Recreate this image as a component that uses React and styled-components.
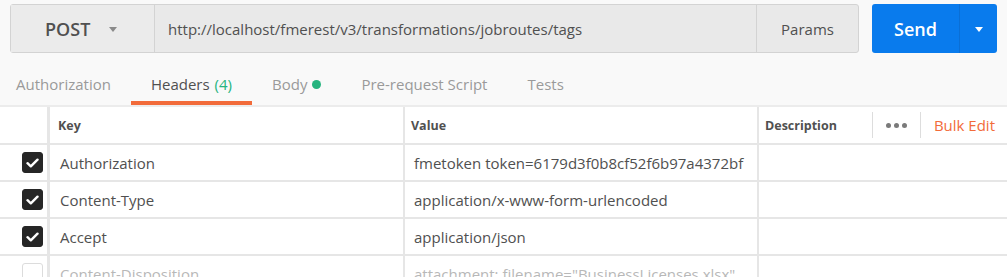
import React from 'react';
import styled, { createGlobalStyle } from 'styled-components';

const GlobalStyle = createGlobalStyle`
  body {
    margin: 0;
    background-color: #f9f9f9;
    font-family: 'Open Sans', 'Noto Sans', sans-serif;
    color: #505050;
  }
`;

const Page = styled.div`
  width: 1007px;
  height: 277px;
  overflow: hidden;
`;

const TopBar = styled.div`
  display: flex;
  padding: 4px 10px 0px 10px;
  height: 49px;
`;

const RequestBox = styled.div`
  flex: 1;
  display: flex;
  background-color: #e9e9e9;
  border: 1px solid #d3d3d3;
  border-radius: 3px;
`;

const MethodSelect = styled.div`
  display: flex;
  align-items: center;
  width: 144px;
  box-sizing: border-box;
  padding: 0px 0px 0px 34px;
  border-right: 1px solid #d3d3d3;
  background-color: #ebebeb;
  font-size: 18px;
  font-weight: 600;
  color: #505050;
`;

const Caret = styled.span`
  display: inline-block;
  width: 0;
  height: 0;
  margin: 1px 0px 0px ${(p) => p.$gap || 0}px;
  border-left: 4px solid transparent;
  border-right: 4px solid transparent;
  border-top: 5px solid ${(p) => p.$color || '#8a8a8a'};
`;

const UrlField = styled.div`
  flex: 1;
  display: flex;
  align-items: center;
  padding: 0px 0px 0px 13px;
  font-size: 15px;
  color: #505050;
`;

const ParamsButton = styled.div`
  display: flex;
  align-items: center;
  justify-content: center;
  width: 101px;
  border-left: 1px solid #d3d3d3;
  font-size: 15px;
  color: #505050;
`;

const SendGroup = styled.div`
  display: flex;
  margin: 0px 0px 0px 13px;
  width: 125px;
  background-color: #097bed;
  border-radius: 3px;
  color: #ffffff;
`;

const SendLabel = styled.div`
  display: flex;
  align-items: center;
  justify-content: center;
  width: 87px;
  font-size: 18px;
  font-weight: 600;
  border-right: 1px solid #0a6fd6;
`;

const SendMenu = styled.div`
  flex: 1;
  display: flex;
  align-items: center;
  justify-content: center;
`;

const TabBar = styled.div`
  display: flex;
  height: 52px;
`;

const Tab = styled.div`
  display: flex;
  align-items: center;
  padding: 14px 20px 0px 20px;
  font-size: 15px;
  color: ${(p) => (p.$active ? '#505050' : '#9a9a9a')};
  border-bottom: 4px solid ${(p) => (p.$active ? '#f26b3a' : 'transparent')};

  &:first-child {
    padding-left: 16px;
  }
`;

const Count = styled.span`
  color: #26b47f;
  margin: 0px 0px 0px 5px;
`;

const Dot = styled.span`
  display: inline-block;
  width: 9px;
  height: 9px;
  border-radius: 50%;
  background-color: #26b47f;
  margin: 1px 0px 0px 5px;
`;

const Table = styled.div`
  display: grid;
  grid-template-columns: 47px 356px 354px 1fr;
  border-top: 2px solid #ececec;
  background-color: #ffffff;
`;

const Cell = styled.div`
  display: flex;
  align-items: center;
  height: ${(p) => (p.$head ? 36 : 35)}px;
  padding: 0px 0px 0px ${(p) => p.$pad || 0}px;
  border-bottom: 2px solid #e6e6e6;
  border-left: ${(p) => p.$line || 0}px solid #e6e6e6;
  font-size: ${(p) => (p.$head ? 12.5 : 15)}px;
  font-weight: ${(p) => (p.$head ? 700 : 400)};
  color: ${(p) => (p.$muted ? '#b8b8b8' : '#505050')};
  white-space: nowrap;
  overflow: hidden;
`;

const CheckCell = styled(Cell)`
  justify-content: flex-end;
  padding: 0px 4px 0px 0px;
`;

const Checkbox = styled.span`
  display: flex;
  align-items: center;
  justify-content: center;
  width: 21px;
  height: 21px;
  box-sizing: border-box;
  border-radius: 3px;
  background-color: ${(p) => (p.$checked ? '#262626' : '#ffffff')};
  border: 1px solid ${(p) => (p.$checked ? '#262626' : '#dcdcdc')};
`;

const HeadTools = styled.div`
  display: flex;
  align-items: center;
  margin: 0px 0px 0px auto;
  height: 26px;
`;

const Dots = styled.div`
  display: flex;
  gap: 3px;
  padding: 0px 13px 0px 13px;
  height: 100%;
  align-items: center;
  border-left: 1px solid #dddddd;
  border-right: 1px solid #dddddd;

  span {
    width: 5px;
    height: 5px;
    border-radius: 50%;
    background-color: #7a7a7a;
  }
`;

const BulkEdit = styled.div`
  padding: 0px 12px 0px 13px;
  font-size: 15px;
  font-weight: 400;
  color: #f26b3a;
`;

const Check = () => (
  <svg width="13" height="10" viewBox="0 0 13 10">
    <path
      d="M1.5 5.2 L4.8 8.3 L11.5 1.7"
      fill="none"
      stroke="#ffffff"
      strokeWidth="2.4"
      strokeLinecap="round"
      strokeLinejoin="round"
    />
  </svg>
);

const rows = [
  { key: 'Authorization', value: 'fmetoken token=6179d3f0b8cf52f6b97a4372bf', checked: true },
  { key: 'Content-Type', value: 'application/x-www-form-urlencoded', checked: true },
  { key: 'Accept', value: 'application/json', checked: true },
  {
    key: 'Content-Disposition',
    value: 'attachment; filename="BusinessLicenses.xlsx"',
    checked: false,
  },
];

const App = () => {
  return (
    <Page>
      <GlobalStyle />
      <TopBar>
        <RequestBox>
          <MethodSelect>
            POST
            <Caret $gap={19} />
          </MethodSelect>
          <UrlField>http://localhost/fmerest/v3/transformations/jobroutes/tags</UrlField>
          <ParamsButton>Params</ParamsButton>
        </RequestBox>
        <SendGroup>
          <SendLabel>Send</SendLabel>
          <SendMenu>
            <Caret $color="#ffffff" />
          </SendMenu>
        </SendGroup>
      </TopBar>
      <TabBar>
        <Tab>Authorization</Tab>
        <Tab $active>
          Headers<Count>(4)</Count>
        </Tab>
        <Tab>
          Body<Dot />
        </Tab>
        <Tab>Pre-request Script</Tab>
        <Tab>Tests</Tab>
      </TabBar>
      <Table>
        <Cell $head />
        <Cell $head $line={3} $pad={8}>Key</Cell>
        <Cell $head $line={2} $pad={6}>Value</Cell>
        <Cell $head $line={2} $pad={6}>
          Description
          <HeadTools>
            <Dots>
              <span />
              <span />
              <span />
            </Dots>
            <BulkEdit>Bulk Edit</BulkEdit>
          </HeadTools>
        </Cell>
        {rows.map((row) => (
          <React.Fragment key={row.key}>
            <CheckCell>
              <Checkbox $checked={row.checked}>{row.checked && <Check />}</Checkbox>
            </CheckCell>
            <Cell $line={3} $pad={10} $muted={!row.checked}>{row.key}</Cell>
            <Cell $line={2} $pad={9} $muted={!row.checked}>{row.value}</Cell>
            <Cell $line={2} />
          </React.Fragment>
        ))}
      </Table>
    </Page>
  );
};

export default App;
